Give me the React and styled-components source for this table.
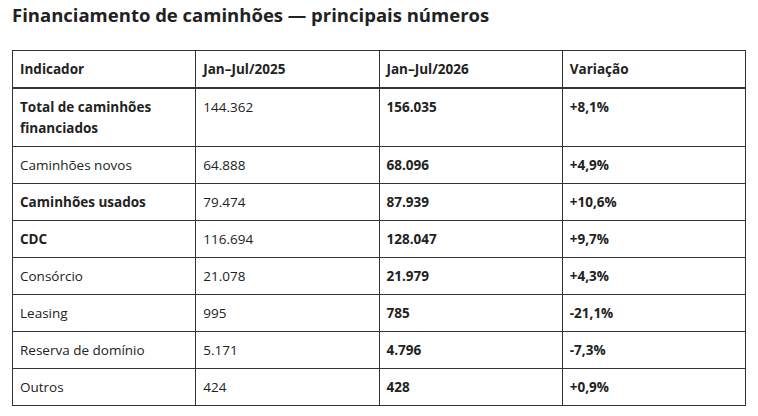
import React from 'react';
import styled, { createGlobalStyle } from 'styled-components';

const GlobalStyle = createGlobalStyle`
  body {
    margin: 0;
    background: #fff;
    font-family: "Open Sans", "Noto Sans", sans-serif;
    color: #222;
  }
`;

const Page = styled.div`
  padding: 3px 12px 0;
`;

const Title = styled.h2`
  margin: 0 0 23px;
  font-size: 18.5px;
  line-height: 24px;
  font-weight: 700;
  color: #222;
`;

const Table = styled.table`
  width: 734px;
  border-collapse: collapse;
  table-layout: fixed;
  font-size: 13.5px;
  line-height: 20px;
`;

const HeadCell = styled.th`
  text-align: left;
  font-weight: 700;
  padding: 8px 7px;
  border: 1px solid #333;
  border-bottom: 2px solid #333;
`;

const Cell = styled.td`
  vertical-align: top;
  padding: 8px 7px;
  border: 1px solid #333;
  font-weight: ${p => (p.$bold ? 700 : 400)};
  line-height: ${p => (p.$wrap ? '20.5px' : '20px')};
`;

const rows = [
  { name: 'Total de caminhões financiados', strong: true, y25: '144.362', y26: '156.035', delta: '+8,1%' },
  { name: 'Caminhões novos', y25: '64.888', y26: '68.096', delta: '+4,9%' },
  { name: 'Caminhões usados', strong: true, y25: '79.474', y26: '87.939', delta: '+10,6%' },
  { name: 'CDC', strong: true, y25: '116.694', y26: '128.047', delta: '+9,7%' },
  { name: 'Consórcio', y25: '21.078', y26: '21.979', delta: '+4,3%' },
  { name: 'Leasing', y25: '995', y26: '785', delta: '-21,1%' },
  { name: 'Reserva de domínio', y25: '5.171', y26: '4.796', delta: '-7,3%' },
  { name: 'Outros', y25: '424', y26: '428', delta: '+0,9%' },
];

export default function App() {
  return (
    <Page>
      <GlobalStyle />
      <Title>Financiamento de caminhões — principais números</Title>
      <Table>
        <thead>
          <tr>
            <HeadCell>Indicador</HeadCell>
            <HeadCell>Jan–Jul/2025</HeadCell>
            <HeadCell>Jan–Jul/2026</HeadCell>
            <HeadCell>Variação</HeadCell>
          </tr>
        </thead>
        <tbody>
          {rows.map(r => (
            <tr key={r.name}>
              <Cell $bold={r.strong} $wrap={r.name.length > 20}>{r.name}</Cell>
              <Cell>{r.y25}</Cell>
              <Cell $bold>{r.y26}</Cell>
              <Cell $bold>{r.delta}</Cell>
            </tr>
          ))}
        </tbody>
      </Table>
    </Page>
  );
}
